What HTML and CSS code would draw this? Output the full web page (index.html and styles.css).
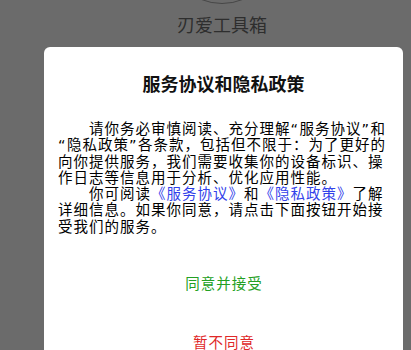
FILE: index.html
```html
<!DOCTYPE html>
<html lang="zh-CN">
<head>
<meta charset="utf-8">
<link rel="stylesheet" href="styles.css">
</head>
<body>
<div class="screen">
  <div class="app-head">
    <div class="logo"></div>
    <div class="app-name">刃爱工具箱</div>
  </div>
  <div class="dialog">
    <div class="dialog-title">服务协议和隐私政策</div>
    <div class="dialog-body">
      <p class="para">请你务必审慎阅读、充分理解<span class="q">“</span>服务协议<span class="q">”</span>和<span class="q">“</span>隐私政策<span class="q">”</span>各条款，包括但不限于：为了更好的向你提供服务，我们需要收集你的设备标识、操作日志等信息用于分析、优化应用性能。</p>
      <p class="para">你可阅读<span class="link">《服务协议》</span>和<span class="link">《隐私政策》</span>了解详细信息。如果你同意，请点击下面按钮开始接受我们的服务。</p>
    </div>
    <div class="btn btn-accept">同意并接受</div>
    <div class="btn btn-reject">暂不同意</div>
  </div>
</div>
</body>
</html>
```
FILE: styles.css
```css
html, body {
  margin: 0;
  padding: 0;
}
body {
  background: #6b6b6b;
  font-family: "Noto Sans CJK SC", "Noto Sans", sans-serif;
  overflow: hidden;
}
.screen {
  width: 411px;
  height: 350px;
  overflow: hidden;
  display: flex;
  flex-direction: column;
}
.app-head {
  display: flex;
  flex-direction: column;
  align-items: center;
  padding-left: 33px;
}
.logo {
  width: 112px;
  height: 112px;
  border-radius: 50%;
  border: 1px solid #474747;
  margin-top: -108px;
  box-sizing: border-box;
}
.app-name {
  margin-top: 8px;
  font-size: 18px;
  line-height: 24px;
  color: #2e2e2e;
}
.dialog {
  margin-top: 11px;
  margin-left: 44px;
  width: 359px;
  background: #ffffff;
  border-radius: 6px 6px 0 0;
  flex: 1;
  display: flex;
  flex-direction: column;
}
.dialog-title {
  padding-top: 24px;
  font-size: 18px;
  line-height: 24px;
  font-weight: 700;
  text-align: center;
  color: #111;
}
.dialog-body {
  padding: 25px 14px 0 14px;
}
.para {
  margin: 0;
  font-size: 14.5px;
  letter-spacing: 1px;
  line-height: 16.3px;
  text-indent: 31px;
  color: #000;
  text-spacing-trim: space-all;
}
.q {
  font-family: "DejaVu Sans", sans-serif;
  letter-spacing: 1.5px;
  line-height: 0;
}
.link {
  color: #3242ea;
}
.btn {
  height: 59px;
  display: flex;
  align-items: center;
  justify-content: center;
  font-size: 14.5px;
  letter-spacing: 1px;
  padding-left: 1px;
  flex-shrink: 0;
}
.btn-accept {
  margin-top: 19px;
  color: #23a023;
}
.btn-reject {
  color: #e02828;
}
```
